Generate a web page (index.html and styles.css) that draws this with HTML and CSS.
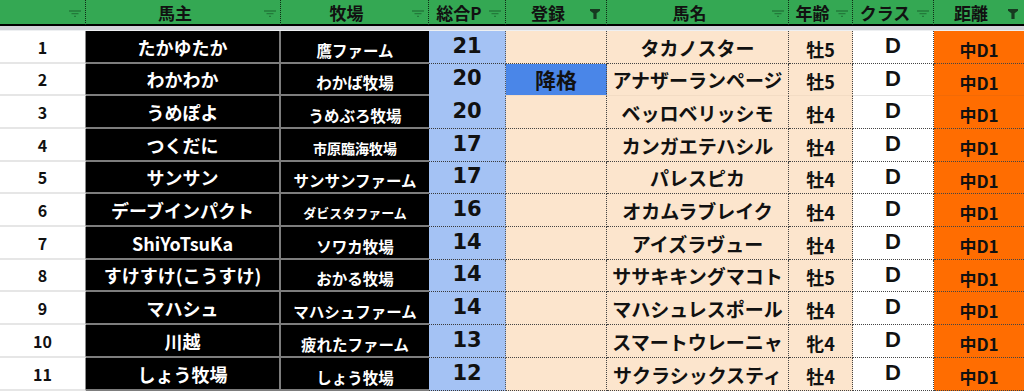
FILE: index.html
```html
<!DOCTYPE html>
<html lang="ja">
<head>
<meta charset="utf-8">
<title>Sheet</title>
<link rel="stylesheet" href="styles.css">
</head>
<body>
<div class="sheet">
  <div class="cols head">
    <div class="hc"><span class="lbl"></span><svg class="fi" width="12" height="8" viewBox="0 0 12 8"><path d="M0 1h12M2.5 3.7h7M5 6.4h2" /></svg></div>
    <div class="hc"><span class="lbl">馬主</span><svg class="fi" width="12" height="8" viewBox="0 0 12 8"><path d="M0 1h12M2.5 3.7h7M5 6.4h2" /></svg></div>
    <div class="hc"><span class="lbl">牧場</span><svg class="fi" width="12" height="8" viewBox="0 0 12 8"><path d="M0 1h12M2.5 3.7h7M5 6.4h2" /></svg></div>
    <div class="hc"><span class="lbl">総合P</span><svg class="fi" width="12" height="8" viewBox="0 0 12 8"><path d="M0 1h12M2.5 3.7h7M5 6.4h2" /></svg></div>
    <div class="hc"><span class="lbl">登録</span><svg class="fa" width="10" height="10" viewBox="0 0 10 10"><path d="M0 0H10V1.8L6.6 4.2V10H3.4V4.2L0 1.8Z" /></svg></div>
    <div class="hc"><span class="lbl">馬名</span><svg class="fi" width="12" height="8" viewBox="0 0 12 8"><path d="M0 1h12M2.5 3.7h7M5 6.4h2" /></svg></div>
    <div class="hc"><span class="lbl">年齢</span><svg class="fi" width="12" height="8" viewBox="0 0 12 8"><path d="M0 1h12M2.5 3.7h7M5 6.4h2" /></svg></div>
    <div class="hc"><span class="lbl">クラス</span><svg class="fi" width="12" height="8" viewBox="0 0 12 8"><path d="M0 1h12M2.5 3.7h7M5 6.4h2" /></svg></div>
    <div class="hc last"><span class="lbl">距離</span><svg class="fa" width="10" height="10" viewBox="0 0 10 10"><path d="M0 0H10V1.8L6.6 4.2V10H3.4V4.2L0 1.8Z" /></svg></div>
  </div>
  <div class="sep"></div>

  <div class="cols row t33">
    <div class="c num">1</div><div class="c own">たかゆたか</div><div class="c farm">鷹ファーム</div>
    <div class="c pt">21</div><div class="c reg"></div><div class="c name">タカノスター</div>
    <div class="c age">牡5</div><div class="c cls">D</div><div class="c dist">中D1</div>
  </div>
  <div class="cols row t32 nb">
    <div class="c num">2</div><div class="c own">わかわか</div><div class="c farm">わかば牧場</div>
    <div class="c pt">20</div><div class="c reg demo">降格</div><div class="c name">アナザーランページ</div>
    <div class="c age">牡5</div><div class="c cls">D</div><div class="c dist">中D1</div>
  </div>
  <div class="cols row t33">
    <div class="c num">3</div><div class="c own">うめぽよ</div><div class="c farm">うめぶろ牧場</div>
    <div class="c pt">20</div><div class="c reg"></div><div class="c name">ベッロベリッシモ</div>
    <div class="c age">牡4</div><div class="c cls">D</div><div class="c dist">中D1</div>
  </div>
  <div class="cols row t33">
    <div class="c num">4</div><div class="c own">つくだに</div><div class="c farm f14">市原臨海牧場</div>
    <div class="c pt">17</div><div class="c reg"></div><div class="c name">カンガエテハシル</div>
    <div class="c age">牡4</div><div class="c cls">D</div><div class="c dist">中D1</div>
  </div>
  <div class="cols row t32">
    <div class="c num">5</div><div class="c own">サンサン</div><div class="c farm">サンサンファーム</div>
    <div class="c pt">17</div><div class="c reg"></div><div class="c name">パレスピカ</div>
    <div class="c age">牡4</div><div class="c cls">D</div><div class="c dist">中D1</div>
  </div>
  <div class="cols row t33">
    <div class="c num">6</div><div class="c own">デーブインパクト</div><div class="c farm f13">ダビスタファーム</div>
    <div class="c pt">16</div><div class="c reg"></div><div class="c name">オカムラブレイク</div>
    <div class="c age">牡4</div><div class="c cls">D</div><div class="c dist">中D1</div>
  </div>
  <div class="cols row t33">
    <div class="c num">7</div><div class="c own">ShiYoTsuKa</div><div class="c farm">ソワカ牧場</div>
    <div class="c pt">14</div><div class="c reg"></div><div class="c name">アイズラヴュー</div>
    <div class="c age">牡4</div><div class="c cls">D</div><div class="c dist">中D1</div>
  </div>
  <div class="cols row t32">
    <div class="c num">8</div><div class="c own">すけすけ(こうすけ)</div><div class="c farm">おかる牧場</div>
    <div class="c pt">14</div><div class="c reg"></div><div class="c name">ササキキングマコト</div>
    <div class="c age">牡5</div><div class="c cls">D</div><div class="c dist">中D1</div>
  </div>
  <div class="cols row t33">
    <div class="c num">9</div><div class="c own">マハシュ</div><div class="c farm">マハシュファーム</div>
    <div class="c pt">14</div><div class="c reg"></div><div class="c name">マハシュレスポール</div>
    <div class="c age">牡4</div><div class="c cls">D</div><div class="c dist">中D1</div>
  </div>
  <div class="cols row t33">
    <div class="c num">10</div><div class="c own">川越</div><div class="c farm">疲れたファーム</div>
    <div class="c pt">13</div><div class="c reg"></div><div class="c name">スマートウレーニャ</div>
    <div class="c age">牝4</div><div class="c cls">D</div><div class="c dist">中D1</div>
  </div>
  <div class="cols row t33">
    <div class="c num">11</div><div class="c own">しょう牧場</div><div class="c farm">しょう牧場</div>
    <div class="c pt">12</div><div class="c reg"></div><div class="c name">サクラシックスティ</div>
    <div class="c age">牡4</div><div class="c cls">D</div><div class="c dist">中D1</div>
  </div>
</div>
</body>
</html>
```

FILE: styles.css
```css
html, body {
  margin: 0;
  padding: 0;
  background: #ffffff;
}
body {
  font-family: "Noto Sans CJK JP", "Noto Sans", sans-serif;
  font-weight: 700;
  color: #111;
  overflow: hidden;
}
.sheet {
  width: 1024px;
}
.cols {
  display: grid;
  grid-template-columns: 86px 195px 148px 77px 101px 182px 64px 81px 90px;
}
.head {
  height: 26px;
  box-sizing: border-box;
  background: #34a853;
  border-bottom: 2px solid #000;
}
.hc {
  display: flex;
  align-items: center;
  border-right: 1px dotted #102a16;
  font-size: 17px;
  line-height: 24px;
  color: #111;
}
.hc.last {
  border-right: 0;
}
.hc .lbl {
  flex: 1;
  text-align: center;
  padding-top: 1px;
}
.fi {
  flex: none;
  margin: 3px 4px 0 0;
}
.fi path {
  stroke: #237a3b;
  stroke-width: 1.3;
  fill: none;
}
.fa {
  flex: none;
  margin: 2px 6px 0 0;
}
.fa path {
  fill: #173a20;
}
.sep {
  height: 5px;
  background: #d1d4d9;
  border-bottom: 1px solid #eef0f2;
  box-sizing: border-box;
}
.t33 { height: 33px; }
.t32 { height: 32px; }
.c {
  display: flex;
  align-items: center;
  justify-content: center;
  box-sizing: border-box;
  white-space: nowrap;
  overflow: hidden;
}
.num {
  background: #fff;
  font-size: 16px;
  border-bottom: 2px solid #e6e6e6;
  border-right: 1px solid #8a8a8a;
}
.own {
  background: #000;
  color: #fff;
  font-size: 18px;
  border-bottom: 2px solid #7d7d7d;
  border-right: 2px solid #7d7d7d;
}
.farm {
  background: #000;
  color: #fff;
  font-size: 15.5px;
  padding-top: 6px;
  border-bottom: 2px solid #7d7d7d;
}
.farm.f14 { font-size: 14px; }
.farm.f13 { font-size: 13px; }
.pt {
  background: #a4c2f4;
  font-family: "DejaVu Sans", sans-serif;
  font-size: 21px;
  padding-bottom: 3px;
  border-bottom: 1px dotted #3a3a3a;
  border-right: 1px dotted #555;
}
.reg {
  background: #fce5cd;
  border-bottom: 1px dotted #444;
  border-right: 1px dotted #444;
}
.reg.demo {
  background: #4a86e8;
  font-size: 21px;
  padding-bottom: 2px;
}
.name {
  background: #fce5cd;
  font-size: 19px;
  border-bottom: 1px dotted #444;
  border-right: 1px dotted #444;
}
.age {
  background: #fce5cd;
  font-size: 18px;
  padding-top: 3px;
  border-bottom: 1px dotted #444;
  border-right: 1px dotted #444;
}
.cls {
  background: #fff;
  font-family: "Liberation Sans", Arial, sans-serif;
  font-size: 22px;
  padding-bottom: 2px;
  border-bottom: 1px dotted #444;
  border-right: 1px dotted #444;
}
.dist {
  background: #ff6d01;
  font-size: 17px;
  padding-top: 5px;
  border-bottom: 1px dotted #444;
}
.nb .pt {
  border-bottom: 1px solid #a4c2f4;
}
.nb .reg, .nb .name, .nb .age {
  border-bottom: 1px solid #f3dcc4;
}
.nb .cls {
  border-bottom: 1px solid #e3e3e3;
}
.nb .dist {
  border-bottom: 1px solid #f26a06;
}
```
